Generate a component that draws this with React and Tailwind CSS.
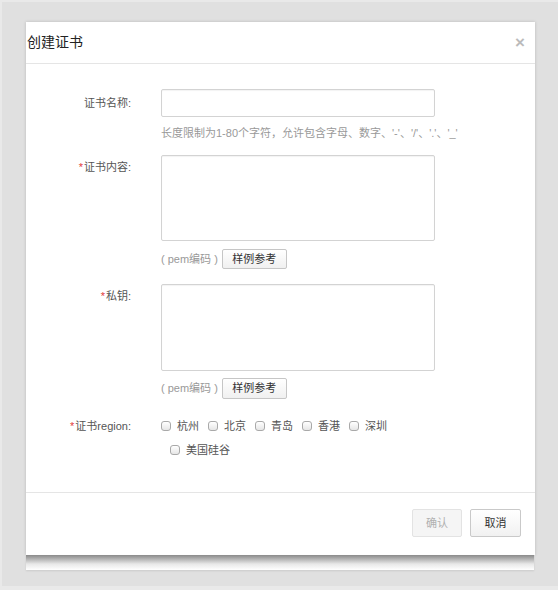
import React from "react";

const font = { fontFamily: '"Liberation Sans", "Noto Sans CJK SC", sans-serif' };

function Req() {
  return <span className="text-[#e23a3a] mr-[1px]">*</span>;
}

function Checkbox({ label }) {
  return (
    <label className="flex items-center ml-[9px] first:ml-0 h-[24px]">
      <span className="block w-[10px] h-[10px] rounded-[3px] border border-[#a9a9a9] bg-gradient-to-b from-white to-[#e6e6e6]" />
      <span className="ml-[6px] text-[#555]">{label}</span>
    </label>
  );
}

function SampleRow({ mt, h }) {
  return (
    <div className={`flex items-center ${mt}`}>
      <span className="text-[#999]">( pem编码 )</span>
      <button className={`ml-[4px] w-[65px] ${h} rounded-[2px] border border-[#c6c6c6] bg-gradient-to-b from-white to-[#f0f0f0] text-[#333] text-[11px]`}>
        样例参考
      </button>
    </div>
  );
}

export default function App() {
  const regions = ["杭州", "北京", "青岛", "香港", "深圳", "美国硅谷"];
  return (
    <div
      className="w-[558px] h-[590px] bg-[#e0e0e0] border-l-2 border-t-2 border-b-[4px] border-[#e9e9e9] pl-[24px] pt-[20px] text-[11px] overflow-hidden"
      style={font}
    >
      <div className="w-[509px] bg-white shadow-[0_0_3px_rgba(0,0,0,0.18)]">
        {/* header */}
        <div className="h-[42px] flex items-center justify-between border-b border-[#e5e5e5] pl-[1px] pr-[10px]">
          <span className="text-[14px] text-[#222]">创建证书</span>
          <span className="text-[17px] leading-none font-bold text-[#bbbbbb] -mt-[1px]">×</span>
        </div>

        {/* body */}
        <div className="pt-[25px] pb-[30px]">
          <div className="flex">
            <div className="w-[105px] text-right leading-[28px] text-[#555]">证书名称:</div>
            <div className="ml-[30px]">
              <input className="block w-[274px] h-[28px] rounded-[2px] border border-[#d3d3d3] shadow-[inset_0_1px_1px_rgba(0,0,0,0.05)] outline-none" />
              <div className="mt-[8px] leading-[16px] text-[#999] whitespace-nowrap">
                长度限制为1-80个字符，允许包含字母、数字、'-'、'/'、'.'、'_'
              </div>
            </div>
          </div>

          <div className="flex mt-[14px]">
            <div className="w-[105px] text-right leading-[24px] text-[#555]">
              <Req />证书内容:
            </div>
            <div className="ml-[30px]">
              <textarea className="block w-[274px] h-[86px] resize-none rounded-[2px] border border-[#d3d3d3] shadow-[inset_0_1px_1px_rgba(0,0,0,0.05)] outline-none" />
              <SampleRow mt="mt-[8px]" h="h-[20px]" />
            </div>
          </div>

          <div className="flex mt-[15px]">
            <div className="w-[105px] text-right leading-[24px] text-[#555]">
              <Req />私钥:
            </div>
            <div className="ml-[30px]">
              <textarea className="block w-[274px] h-[87px] resize-none rounded-[2px] border border-[#d3d3d3] shadow-[inset_0_1px_1px_rgba(0,0,0,0.05)] outline-none" />
              <SampleRow mt="mt-[7px]" h="h-[21px]" />
            </div>
          </div>

          <div className="flex mt-[15px]">
            <div className="w-[105px] text-right leading-[24px] text-[#555]">
              <Req />证书region:
            </div>
            <div className="ml-[30px] w-[274px] flex flex-wrap">
              {regions.map((r) => (
                <Checkbox key={r} label={r} />
              ))}
            </div>
          </div>
        </div>

        {/* footer */}
        <div className="border-t border-[#e5e5e5] pt-[16px] pb-[18px] pr-[14px] flex justify-end gap-[8px]">
          <button className="w-[50px] h-[28px] rounded-[2px] border border-[#e3e3e3] bg-[#f5f5f5] text-[#b0b0b0] text-[11px]">
            确认
          </button>
          <button className="w-[51px] h-[28px] rounded-[2px] border border-[#c9c9c9] bg-gradient-to-b from-white to-[#f1f1f1] text-[#333] text-[11px]">
            取消
          </button>
        </div>
      </div>
      <div className="w-[508px] h-[15px] bg-gradient-to-b from-[#8a8a8a] via-[#e8e8e8] via-60% to-white shadow-[0_1px_2px_rgba(0,0,0,0.1)]" />
    </div>
  );
}
